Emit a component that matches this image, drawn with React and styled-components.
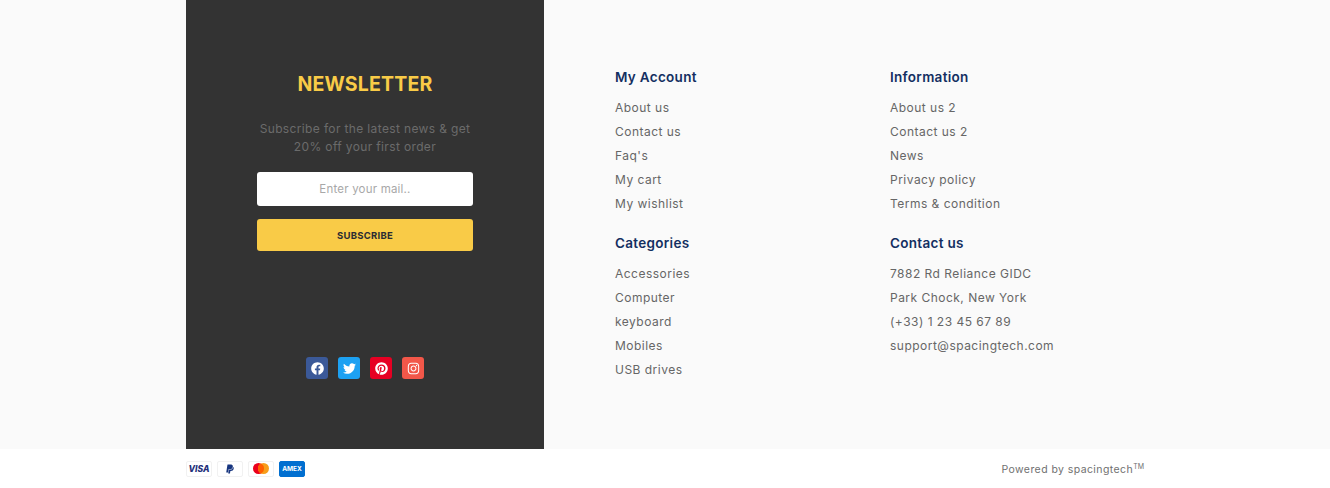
import React from "react";
import styled, { createGlobalStyle } from "styled-components";
import { FaFacebook, FaTwitter, FaPinterest, FaInstagram, FaPaypal } from "react-icons/fa";

const GlobalStyle = createGlobalStyle`
  body {
    margin: 0;
    background: #fff;
    font-family: "Inter", "Liberation Sans", sans-serif;
  }
`;

const Top = styled.div`
  background: #fafafa;
  height: 449px;
`;

const Container = styled.div`
  width: 958px;
  margin: 0 auto 0 186px;
  display: flex;
  height: 100%;
`;

const Newsletter = styled.div`
  width: 358px;
  height: 100%;
  background: #333;
  display: flex;
  flex-direction: column;
  align-items: center;
  box-sizing: border-box;
  padding-top: 69px;
`;

const Title = styled.h2`
  margin: 0;
  font-size: 19.5px;
  line-height: 30px;
  font-weight: 700;
  color: #f9cb47;
  letter-spacing: 0.2px;
`;

const Desc = styled.p`
  margin: 21px 0 0;
  font-size: 12px;
  line-height: 17.5px;
  color: #6b6b6b;
  text-align: center;
  letter-spacing: 0.36px;
`;

const MailInput = styled.input`
  display: block;
  box-sizing: border-box;
  width: 216px;
  height: 34px;
  margin-top: 17px;
  border: none;
  border-radius: 3px;
  background: #fff;
  text-align: center;
  font-family: inherit;
  font-size: 11.5px;
  letter-spacing: 0.2px;
  &::placeholder {
    color: #a8a8a8;
    opacity: 1;
  }
`;

const SubscribeButton = styled.button`
  display: block;
  width: 216px;
  height: 32px;
  margin-top: 13px;
  border: none;
  border-radius: 3px;
  background: #f9cb47;
  color: #2b2b33;
  font-family: inherit;
  font-size: 9.5px;
  font-weight: 700;
  letter-spacing: 0.25px;
`;

const Socials = styled.div`
  display: flex;
  gap: 10px;
  margin-top: 106px;
`;

const Social = styled.a`
  width: 22px;
  height: 22px;
  border-radius: 3px;
  display: flex;
  align-items: center;
  justify-content: center;
  background: ${(props) => props.bg};
  color: #fff;
  font-size: 13px;
`;

const Links = styled.div`
  flex: 1;
  display: grid;
  grid-template-columns: 275px 1fr;
  grid-auto-rows: min-content;
  row-gap: 15px;
  padding: 65px 0 0 71px;
`;

const Heading = styled.h3`
  margin: 0 0 7px;
  font-size: 13.5px;
  line-height: 24px;
  font-weight: 600;
  color: #132f61;
  letter-spacing: 0.3px;
`;

const LinkList = styled.ul`
  margin: 0;
  padding: 0;
  list-style: none;
`;

const LinkItem = styled.li`
  font-size: 12px;
  line-height: 24px;
  color: #666;
  letter-spacing: 0.48px;
`;

const Bottom = styled.div`
  width: 958px;
  margin-left: 186px;
  height: 39px;
  display: flex;
  align-items: center;
  justify-content: space-between;
`;

const Payments = styled.div`
  display: flex;
  gap: 5px;
`;

const Card = styled.div`
  width: 26px;
  height: 16px;
  box-sizing: border-box;
  border-radius: 2px;
  border: 1px solid ${(props) => (props.blue ? "#016fd0" : "#f1f1f1")};
  background: ${(props) => (props.blue ? "#016fd0" : "#fff")};
  display: flex;
  align-items: center;
  justify-content: center;
  color: ${(props) => props.color || "#1a2a6c"};
  font-size: 10px;
`;

const VisaText = styled.span`
  font-style: italic;
  font-size: 8.5px;
  font-weight: 800;
  color: #24307a;
`;

const AmexText = styled.span`
  font-size: 6.5px;
  font-weight: 700;
  color: #fff;
`;

const Powered = styled.div`
  font-size: 10.5px;
  color: #707070;
  letter-spacing: 0.42px;
  padding-top: 1px;
  sup {
    font-size: 7px;
    line-height: 0;
    letter-spacing: 0;
  }
`;

const columns = [
  { title: "My Account", items: ["About us", "Contact us", "Faq's", "My cart", "My wishlist"] },
  { title: "Information", items: ["About us 2", "Contact us 2", "News", "Privacy policy", "Terms & condition"] },
  { title: "Categories", items: ["Accessories", "Computer", "keyboard", "Mobiles", "USB drives"] },
  { title: "Contact us", items: ["7882 Rd Reliance GIDC", "Park Chock, New York", "(+33) 1 23 45 67 89", "support@spacingtech.com"] },
];

export default function App() {
  return (
    <>
      <GlobalStyle />
      <Top>
        <Container>
          <Newsletter>
            <Title>NEWSLETTER</Title>
            <Desc>
              Subscribe for the latest news &amp; get
              <br />
              20% off your first order
            </Desc>
            <MailInput placeholder="Enter your mail.." />
            <SubscribeButton>SUBSCRIBE</SubscribeButton>
            <Socials>
              <Social bg="#3b5998"><FaFacebook /></Social>
              <Social bg="#1da1f2"><FaTwitter /></Social>
              <Social bg="#e60023"><FaPinterest /></Social>
              <Social bg="#f25749"><FaInstagram /></Social>
            </Socials>
          </Newsletter>
          <Links>
            {columns.map((col) => (
              <div key={col.title}>
                <Heading>{col.title}</Heading>
                <LinkList>
                  {col.items.map((item) => (
                    <LinkItem key={item}>{item}</LinkItem>
                  ))}
                </LinkList>
              </div>
            ))}
          </Links>
        </Container>
      </Top>
      <Bottom>
        <Payments>
          <Card><VisaText>VISA</VisaText></Card>
          <Card color="#17357f"><FaPaypal /></Card>
          <Card>
            <svg width="16" height="11" viewBox="0 0 16 11">
              <circle cx="5.5" cy="5.5" r="5.5" fill="#eb001b" />
              <circle cx="10.5" cy="5.5" r="5.5" fill="#f79e1b" />
              <path d="M8 .6a5.5 5.5 0 0 1 0 9.8a5.5 5.5 0 0 1 0-9.8z" fill="#ff5f00" />
            </svg>
          </Card>
          <Card blue><AmexText>AMEX</AmexText></Card>
        </Payments>
        <Powered>
          Powered by spacingtech<sup>TM</sup>
        </Powered>
      </Bottom>
    </>
  );
}
